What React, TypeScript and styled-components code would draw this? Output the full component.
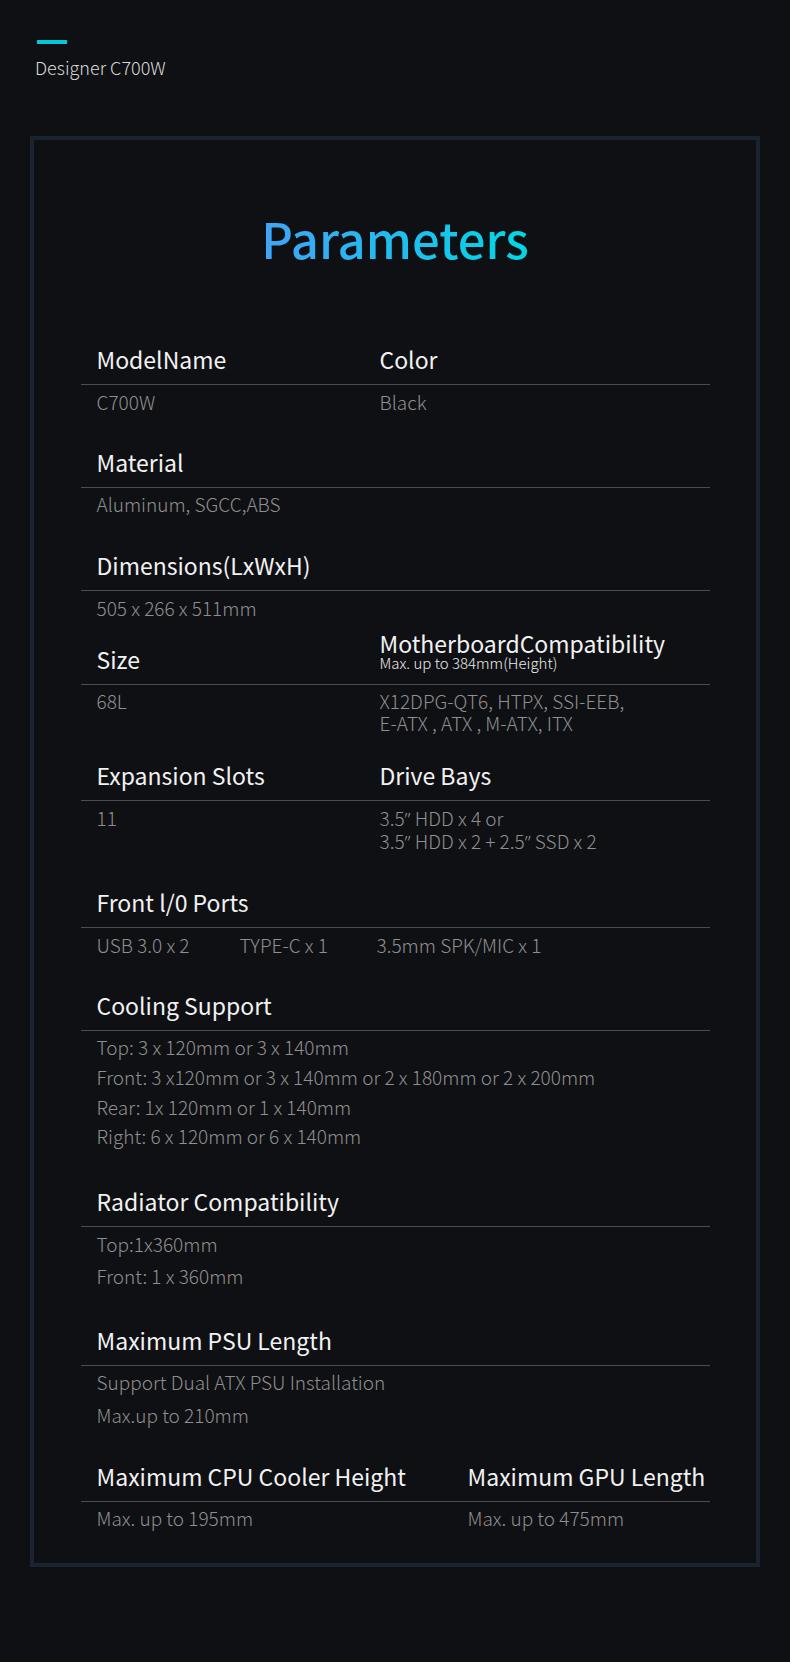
import * as React from 'react';
import styled, { createGlobalStyle } from 'styled-components';

const GlobalStyle = createGlobalStyle`
  body {
    margin: 0;
    background: #0f1014;
    font-family: 'Noto Sans CJK SC', 'Noto Sans', sans-serif;
  }
`;

/** Page frame */
const Page = styled.div`
  width: 790px;
  min-height: 1662px;
  background: #0f1014;
  padding-top: 40px;
  box-sizing: border-box;
  overflow: hidden;
`;

const Accent = styled.div`
  width: 30px;
  height: 4px;
  margin-left: 37px;
  background: #00c9db;
`;

const Brand = styled.div`
  margin: 14px 0 0 35px;
  font-size: 18px;
  line-height: 19px;
  font-weight: 300;
  color: #d9d9d9;
`;

/** Parameter card */
const Card = styled.section`
  width: 730px;
  margin: 59px 0 0 30px;
  border: 4px solid #1c2330;
  box-sizing: border-box;
  padding: 74px 0 33px;
`;

const Title = styled.h1`
  margin: 0 auto 85px;
  width: fit-content;
  text-align: center;
  font-size: 49px;
  line-height: 48px;
  font-weight: 500;
  background: linear-gradient(90deg, #42a3f6 0%, #20bdf0 50%, #00d8e4 100%);
  -webkit-background-clip: text;
  background-clip: text;
  color: transparent;
`;

const Table = styled.div`
  width: 629px;
  margin: 0 auto;
`;

const Section = styled.div<{ $gap: number }>`
  margin-top: ${(p) => p.$gap}px;
`;

const Head = styled.div<{ $cols: string }>`
  display: grid;
  grid-template-columns: ${(p) => p.$cols};
  align-items: end;
  padding: 0 0 13px 16px;
  border-bottom: 1px solid #4a4c51;
`;

const Label = styled.div`
  font-size: 23px;
  line-height: 24px;
  font-weight: 400;
  color: #f2f2f2;
  white-space: nowrap;
`;

const SubLabel = styled.div`
  font-size: 15px;
  line-height: 16px;
  font-weight: 300;
  color: #ececec;
  white-space: nowrap;
`;

const Body = styled.div<{ $cols: string; $lh: number }>`
  display: grid;
  grid-template-columns: ${(p) => p.$cols};
  padding: ${(p) => 16.5 - p.$lh / 2}px 0 0 16px;
  font-size: 19px;
  line-height: ${(p) => p.$lh}px;
  font-weight: 300;
  color: #8f8f8f;
  white-space: nowrap;
`;

/** Latin quote mark, kept narrow instead of the CJK full-width form */
const Quote = styled.span`
  font-family: 'Noto Sans', 'Liberation Sans', sans-serif;
  line-height: 0;
`;

const TWO = '283px 1fr';
const ONE = '1fr';

interface IRow {
  labels: React.ReactNode[];
  values: React.ReactNode[];
  cols: string;
  lh: number;
  gap: number;
  valueCols?: string;
}

const rows: IRow[] = [
  { labels: ['ModelName', 'Color'], values: ['C700W', 'Black'], cols: TWO, lh: 24, gap: 0 },
  { labels: ['Material'], values: ['Aluminum, SGCC,ABS'], cols: ONE, lh: 24, gap: 36 },
  { labels: ['Dimensions(LxWxH)'], values: ['505 x 266 x 511mm'], cols: ONE, lh: 24, gap: 37 },
  {
    labels: [
      'Size',
      <div key="mb">
        <Label>MotherboardCompatibility</Label>
        <SubLabel>Max. up to 384mm(Height)</SubLabel>
      </div>,
    ],
    values: [
      '68L',
      <div key="mbv">
        X12DPG-QT6, HTPX, SSI-EEB,
        <br />
        E-ATX , ATX , M-ATX, ITX
      </div>,
    ],
    cols: TWO,
    lh: 22,
    gap: 11,
  },
  {
    labels: ['Expansion Slots', 'Drive Bays'],
    values: [
      '11',
      <div key="db">
        3.5<Quote>”</Quote> HDD x 4 or
        <br />
        3.5<Quote>”</Quote> HDD x 2 + 2.5<Quote>”</Quote> SSD x 2
      </div>,
    ],
    cols: TWO,
    lh: 23,
    gap: 29,
  },
  {
    labels: ['Front l/0 Ports'],
    values: ['USB 3.0 x 2', 'TYPE-C x 1', '3.5mm SPK/MIC x 1'],
    cols: ONE,
    valueCols: '143px 137px 1fr',
    lh: 24,
    gap: 38,
  },
  {
    labels: ['Cooling Support'],
    values: [
      <div key="cs">
        Top: 3 x 120mm or 3 x 140mm
        <br />
        Front: 3 x120mm or 3 x 140mm or 2 x 180mm or 2 x 200mm
        <br />
        Rear: 1x 120mm or 1 x 140mm
        <br />
        Right: 6 x 120mm or 6 x 140mm
      </div>,
    ],
    cols: ONE,
    lh: 29.8,
    gap: 36,
  },
  {
    labels: ['Radiator Compatibility'],
    values: [
      <div key="rc">
        Top:1x360mm
        <br />
        Front: 1 x 360mm
      </div>,
    ],
    cols: ONE,
    lh: 31.7,
    gap: 38,
  },
  {
    labels: ['Maximum PSU Length'],
    values: [
      <div key="psu">
        Support Dual ATX PSU Installation
        <br />
        Max.up to 210mm
      </div>,
    ],
    cols: ONE,
    lh: 32.7,
    gap: 37,
  },
  {
    labels: ['Maximum CPU Cooler Height', 'Maximum GPU Length'],
    values: ['Max. up to 195mm', 'Max. up to 475mm'],
    cols: '371px 1fr',
    lh: 24,
    gap: 32,
  },
];

const App: React.FC = () => (
  <Page>
    <GlobalStyle />
    <Accent />
    <Brand>Designer C700W</Brand>
    <Card>
      <Title>Parameters</Title>
      <Table>
        {rows.map((row, i) => (
          <Section key={i} $gap={row.gap}>
            <Head $cols={row.cols}>
              {row.labels.map((l, j) =>
                typeof l === 'string' ? <Label key={j}>{l}</Label> : l
              )}
            </Head>
            <Body $cols={row.valueCols || row.cols} $lh={row.lh}>
              {row.values.map((v, j) => (typeof v === 'string' ? <div key={j}>{v}</div> : v))}
            </Body>
          </Section>
        ))}
      </Table>
    </Card>
  </Page>
);

export default App;
